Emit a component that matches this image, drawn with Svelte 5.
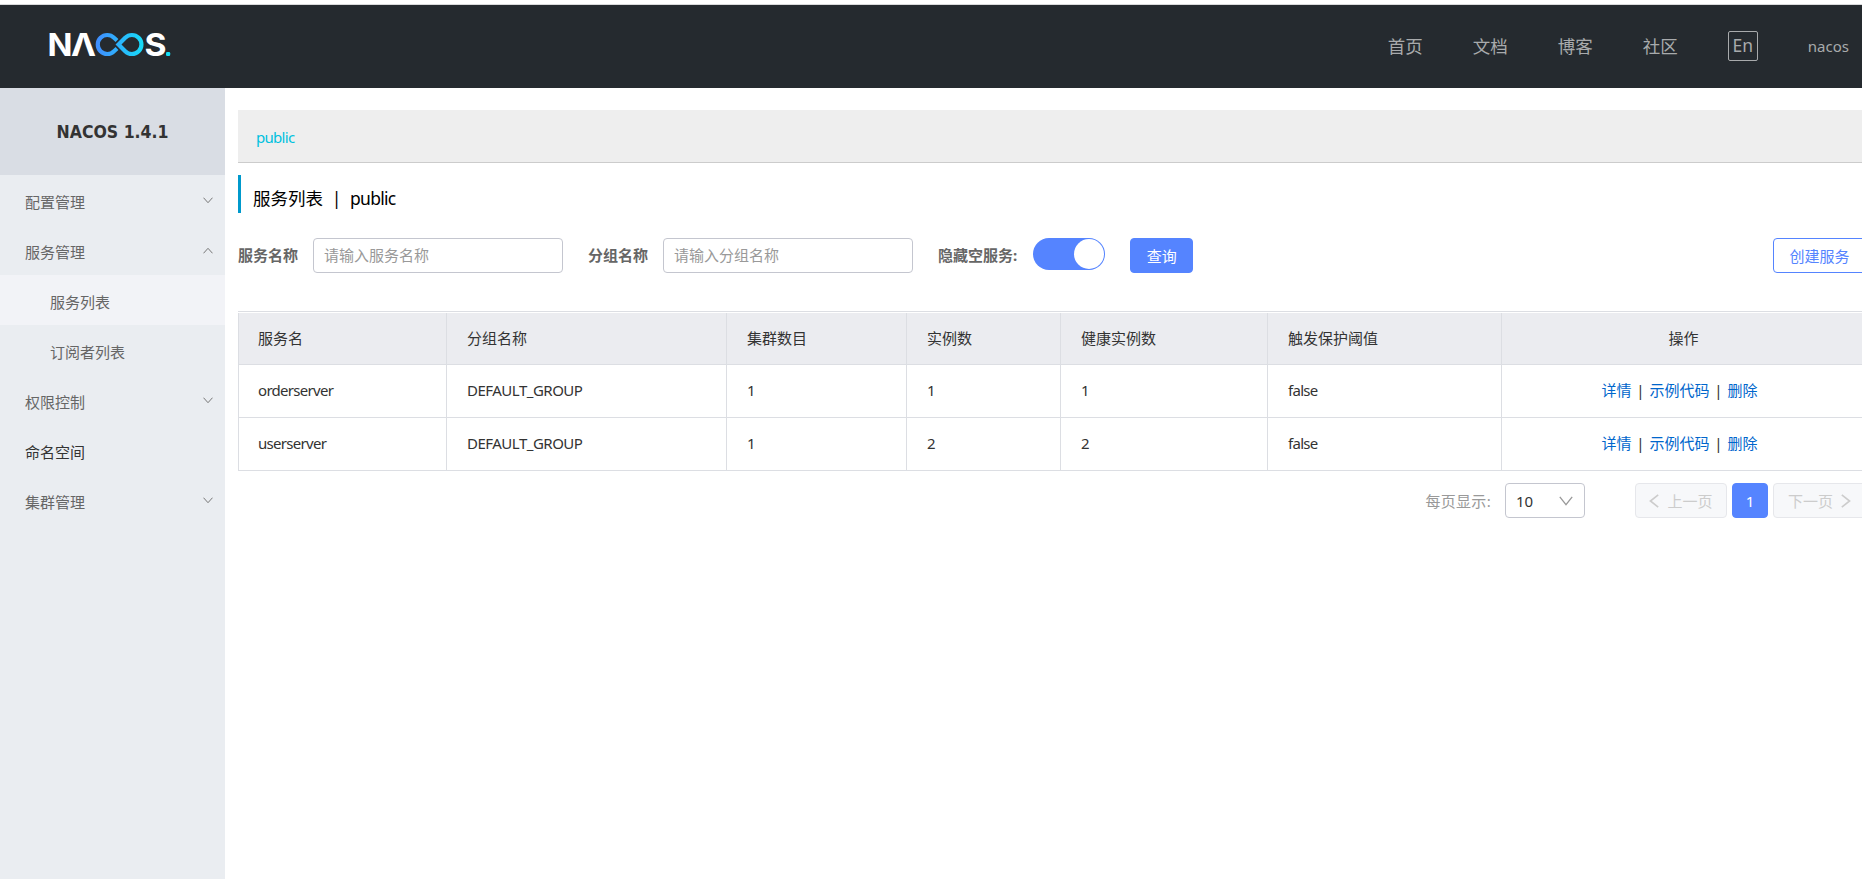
<script lang="ts">
  type MenuItem = {
    label: string;
    expandable?: boolean;
    open?: boolean;
    strong?: boolean;
    children?: { label: string; active?: boolean }[];
  };

  const nav = ['首页', '文档', '博客', '社区'];

  const menu: MenuItem[] = [
    { label: '配置管理', expandable: true },
    {
      label: '服务管理',
      expandable: true,
      open: true,
      children: [{ label: '服务列表', active: true }, { label: '订阅者列表' }],
    },
    { label: '权限控制', expandable: true },
    { label: '命名空间', strong: true },
    { label: '集群管理', expandable: true },
  ];

  const columns = ['服务名', '分组名称', '集群数目', '实例数', '健康实例数', '触发保护阈值'];

  const services = [
    { name: 'orderserver', group: 'DEFAULT_GROUP', clusters: 1, instances: 1, healthy: 1, threshold: 'false' },
    { name: 'userserver', group: 'DEFAULT_GROUP', clusters: 1, instances: 2, healthy: 2, threshold: 'false' },
  ];

  let serviceName = $state('');
  let groupName = $state('');
  let hideEmpty = $state(true);
</script>

<div class="page">
  <header class="topbar">
    <svg class="logo" width="134" height="56" viewBox="-6 -10 134 56" aria-label="NACOS">
      <defs>
        <linearGradient id="loop" gradientUnits="userSpaceOnUse" x1="46" y1="0" x2="96" y2="0">
          <stop offset="0" stop-color="#418cff" />
          <stop offset="1" stop-color="#14e0f8" />
        </linearGradient>
      </defs>
      <g class="letters">
        <text x="-2.4" y="27" textLength="25" lengthAdjust="spacingAndGlyphs">N</text>
        <text x="21" y="27" textLength="25" lengthAdjust="spacingAndGlyphs">Λ</text>
        <text x="94.6" y="27" textLength="22" lengthAdjust="spacingAndGlyphs">S</text>
      </g>
      <g fill="none" stroke="url(#loop)" stroke-width="4.2">
        <path d="M67 11.5 L64 8.8 A9.5 9.5 0 1 0 64 22.2 L67 19.5" />
        <path d="M68.5 15.5 L75.2 8.8 A9.5 9.5 0 1 1 75.2 22.2 Z" />
      </g>
      <rect x="116" y="23" width="4.2" height="4" rx="1.2" fill="#14e0f8" />
    </svg>
    <nav>
      {#each nav as item}
        <a href="#top">{item}</a>
      {/each}
      <span class="lang">En</span>
      <span class="user">nacos</span>
    </nav>
  </header>

  <div class="body">
    <aside>
      <h1>NACOS 1.4.1</h1>
      {#each menu as item}
        <div class="item" class:strong={item.strong}>
          {item.label}
          {#if item.expandable}
            <svg class:open={item.open} width="10" height="7" viewBox="0 0 10 7">
              <path d="M0.5 0.7 L5 5.7 L9.5 0.7" />
            </svg>
          {/if}
        </div>
        {#each item.children ?? [] as child}
          <div class="item sub" class:active={child.active}>{child.label}</div>
        {/each}
      {/each}
    </aside>

    <main>
      <div class="namespace latin">public</div>
      <h2>服务列表<span class="bar">|</span><span class="latin">public</span></h2>

      <form onsubmit={(e) => e.preventDefault()}>
        <label for="service">服务名称</label>
        <input id="service" placeholder="请输入服务名称" bind:value={serviceName} />
        <label for="group" class="next">分组名称</label>
        <input id="group" placeholder="请输入分组名称" bind:value={groupName} />
        <span class="label next">隐藏空服务:</span>
        <button
          class="switch"
          class:on={hideEmpty}
          type="button"
          aria-label="隐藏空服务"
          onclick={() => (hideEmpty = !hideEmpty)}
        >
          <span class="knob"></span>
        </button>
        <button class="primary" type="submit">查询</button>
        <button class="create" type="button">创建服务</button>
      </form>

      <div class="table">
        <div class="row head">
          {#each columns as column}
            <div class="cell">{column}</div>
          {/each}
          <div class="cell ops">操作</div>
        </div>
        {#each services as service}
          <div class="row">
            <div class="cell latin">{service.name}</div>
            <div class="cell latin group">{service.group}</div>
            <div class="cell latin">{service.clusters}</div>
            <div class="cell latin">{service.instances}</div>
            <div class="cell latin">{service.healthy}</div>
            <div class="cell latin">{service.threshold}</div>
            <div class="cell ops links">
              <a href="#detail">详情</a><i>|</i><a href="#code">示例代码</a><i>|</i><a href="#delete">删除</a>
            </div>
          </div>
        {/each}
      </div>

      <div class="pagination">
        <span class="size-label">每页显示:</span>
        <div class="select">
          10
          <svg width="14" height="10" viewBox="0 0 14 10"><path d="M0.8 0.8 L7 8.6 L13.2 0.8" /></svg>
        </div>
        <button class="page-btn prev" disabled>
          <svg width="10" height="14" viewBox="0 0 10 14"><path d="M9.2 0.8 L1.4 7 L9.2 13.2" /></svg>
          上一页
        </button>
        <button class="page-btn current">1</button>
        <button class="page-btn" disabled>
          下一页
          <svg width="10" height="14" viewBox="0 0 10 14"><path d="M0.8 0.8 L8.6 7 L0.8 13.2" /></svg>
        </button>
      </div>
    </main>
  </div>
</div>

<style>
  :global(body) {
    background: #fff;
  }

  .page {
    box-sizing: border-box;
    display: flex;
    flex-direction: column;
    height: 879px;
    padding-top: 4px;
    overflow: hidden;
    font-family: 'Noto Sans', 'Noto Sans CJK SC', sans-serif;
    font-size: 15px;
    line-height: 20px;
    color: #333;
  }

  input,
  button {
    box-sizing: border-box;
    margin: 0;
    font: inherit;
  }

  a {
    text-decoration: none;
  }

  /* Latin values sit a little tighter than the CJK text around them. */
  .latin {
    letter-spacing: -0.7px;
  }

  .topbar {
    display: flex;
    flex: none;
    justify-content: space-between;
    height: 83px;
    border-top: 1px solid #d9dadb;
    background: #252a2f;
  }

  .logo {
    margin: 14px 0 0 44px;
  }

  .letters {
    font-family: Inter, sans-serif;
    font-size: 31.6px;
    font-weight: 700;
    fill: #fff;
  }

  nav {
    display: flex;
    align-items: center;
    gap: 50px;
    height: 82px;
    padding-right: 13px;
    color: #a8aaac;
  }

  nav a {
    font-size: 17.5px;
    color: inherit;
  }

  .lang {
    box-sizing: border-box;
    width: 30px;
    height: 30px;
    border: 1px solid #a8aaac;
    border-radius: 2px;
    font-size: 17.5px;
    line-height: 27px;
    text-align: center;
  }

  .body {
    display: flex;
    flex: 1;
    min-height: 0;
  }

  aside {
    flex: none;
    width: 225px;
    background: #eaedf1;
  }

  h1 {
    margin: 0;
    height: 87px;
    background: #d9dde4;
    font-family: 'DejaVu Sans Condensed', 'DejaVu Sans', sans-serif;
    font-size: 17.5px;
    font-stretch: condensed;
    font-weight: 700;
    line-height: 89px;
    text-align: center;
  }

  .item {
    display: flex;
    align-items: center;
    justify-content: space-between;
    box-sizing: border-box;
    height: 50px;
    padding: 4px 12px 0 25px;
    color: #666;
  }

  .item.strong {
    color: #333;
  }

  .item.sub {
    padding-left: 50px;
  }

  .item.active {
    background: #f2f3f7;
  }

  svg path {
    fill: none;
  }

  .item path {
    stroke: #777;
  }

  .item svg {
    margin-bottom: 4px;
  }

  .item svg.open {
    transform: rotate(180deg);
  }

  main {
    flex: none;
    width: 1628px;
    padding: 22px 0 0 13px;
  }

  .namespace {
    height: 52px;
    padding-left: 18px;
    border-bottom: 1px solid #ccc;
    background: #eee;
    color: #00c1de;
    line-height: 55px;
  }

  h2 {
    display: flex;
    height: 38px;
    margin: 12px 0 25px;
    padding-left: 12px;
    border-left: 3px solid #09c;
    font-size: 17.5px;
    font-weight: 400;
    line-height: 46px;
    color: #000;
  }

  .bar {
    width: 27px;
    text-align: center;
  }

  form {
    display: flex;
    height: 35px;
    line-height: 35px;
  }

  label,
  .label {
    margin-right: 15px;
    font-weight: 700;
    color: #666;
  }

  .next {
    margin-left: 25px;
  }

  input {
    width: 250px;
    padding: 0 10px;
    border: 1px solid #c4c6cf;
    border-radius: 4px;
    outline: none;
  }

  input::placeholder {
    color: #999;
  }

  .switch {
    display: flex;
    width: 72px;
    height: 32px;
    margin-left: 1px;
    padding: 1px;
    border: 0;
    border-radius: 16px;
    background: #ccc;
  }

  .switch.on {
    justify-content: flex-end;
    background: #5584ff;
  }

  .knob {
    width: 30px;
    height: 30px;
    border-radius: 50%;
    background: #fff;
  }

  .primary,
  .create {
    height: 35px;
    padding: 0 15px;
    border: 1px solid #5584ff;
    border-radius: 4px;
    line-height: 32px;
  }

  .primary {
    width: 63px;
    margin-left: 25px;
    background: #5584ff;
    color: #fff;
  }

  .create {
    width: 93px;
    margin-left: auto;
    background: #fff;
    color: #5584ff;
  }

  .table {
    margin-top: 38px;
    padding-top: 1px;
    border-top: 1px solid #dcdee3;
  }

  /* The last track runs past the right edge of the window. */
  .row {
    display: grid;
    grid-template-columns: 209px 280px 180px 154px 207px 234px 1fr;
    height: 53px;
  }

  .head {
    height: 52px;
    background: #ebecf0;
  }

  .cell {
    box-sizing: border-box;
    padding: 0 20px;
    border-right: 1px solid #dcdee3;
    border-bottom: 1px solid #dcdee3;
    line-height: 51px;
  }

  .cell:first-child {
    padding-left: 19px;
    border-left: 1px solid #dcdee3;
  }

  .cell.group {
    letter-spacing: -0.5px;
  }

  .cell.ops {
    display: flex;
    justify-content: center;
  }

  .cell.links {
    padding-right: 28px;
  }

  .ops a {
    color: #06c;
  }

  .ops i {
    width: 18px;
    font-style: normal;
    text-align: center;
  }

  .pagination {
    display: flex;
    align-items: center;
    justify-content: flex-end;
    height: 35px;
    margin-top: 12px;
  }

  .size-label {
    margin-right: 14px;
    letter-spacing: 0.3px;
    color: #999;
  }

  .select {
    display: flex;
    align-items: center;
    justify-content: space-between;
    box-sizing: border-box;
    width: 80px;
    height: 35px;
    margin-right: 50px;
    padding: 0 11px 0 10px;
    border: 1px solid #c4c6cf;
    border-radius: 4px;
  }

  .select path {
    stroke: #999;
    stroke-width: 1.3;
  }

  .page-btn {
    display: flex;
    align-items: center;
    justify-content: center;
    gap: 8px;
    width: 93px;
    height: 35px;
    padding: 0;
    border: 1px solid #e6e7eb;
    border-radius: 4px;
    background: #f7f8fa;
    color: #ccc;
  }

  .page-btn.prev {
    width: 92px;
  }

  .page-btn path {
    stroke: #ccc;
    stroke-width: 1.6;
  }

  .page-btn.current {
    width: 36px;
    margin: 0 5px;
    border-color: #5584ff;
    background: #5584ff;
    color: #fff;
  }
</style>
